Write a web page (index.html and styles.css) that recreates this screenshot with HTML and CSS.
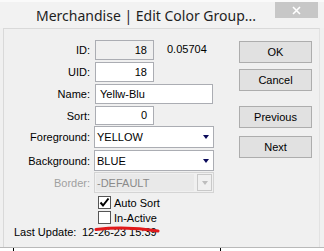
FILE: index.html
```html
<!DOCTYPE html>
<html lang="en">
<head>
  <meta charset="UTF-8" />
  <title>Merchandise | Edit Color Group</title>
  <link rel="stylesheet" href="styles.css">
</head>
<body>
  <div class="window">
    <div class="titlebar">
      <span class="title">Merchandise | Edit Color Group...</span>
      <div class="close">
        <svg width="9" height="9" viewBox="0 0 9 9"><path d="M1 1 L8 8 M8 1 L1 8" stroke="#fff" stroke-width="1.6"/></svg>
      </div>
    </div>

    <div class="client">
      <div class="form">
        <div class="row r-id">
          <label>ID:</label>
          <div class="text readonly num small">18</div>
          <span class="extra">0.05704</span>
        </div>
        <div class="row r-uid">
          <label>UID:</label>
          <div class="text num small">18</div>
        </div>
        <div class="row r-name">
          <label>Name:</label>
          <div class="text wide">Yellw-Blu</div>
        </div>
        <div class="row r-sort">
          <label>Sort:</label>
          <div class="text num small">0</div>
        </div>
        <div class="row r-fg">
          <label>Foreground:</label>
          <div class="combo"><span>YELLOW</span><i class="arrow"></i></div>
        </div>
        <div class="row r-bg">
          <label>Background:</label>
          <div class="combo"><span>BLUE</span><i class="arrow"></i></div>
        </div>
        <div class="row r-border">
          <label class="disabled">Border:</label>
          <div class="combo off"><span class="val">-DEFAULT</span><span class="btn"><i class="arrow"></i></span></div>
        </div>
        <div class="row check r-auto">
          <span class="box">
            <svg width="11" height="11" viewBox="0 0 11 11"><path d="M1.5 5.5 L4 8.5 L9.5 1.5" fill="none" stroke="#000" stroke-width="2"/></svg>
          </span>
          <span>Auto Sort</span>
        </div>
        <div class="row check r-active">
          <span class="box"></span>
          <span>In-Active</span>
        </div>
        <div class="updated">
          <span class="caption">Last Update:</span>
          <span>12-26-23 15:39</span>
        </div>
      </div>

      <div class="buttons">
        <div class="button">OK</div>
        <div class="button">Cancel</div>
        <div class="button gap">Previous</div>
        <div class="button">Next</div>
      </div>

      <!-- hand drawn mark over the dialog -->
      <svg class="scribble" width="70" height="10" viewBox="0 0 70 10">
        <path d="M2 4.5 Q 32 1 64 6" fill="none" stroke="#e0191b" stroke-width="3" stroke-linecap="round"/>
      </svg>
    </div>
  </div>
  <div class="behind">
    <span class="tick t1"></span>
    <span class="tick t2"></span>
  </div>
</body>
</html>
```

FILE: styles.css
```css
* {
  box-sizing: border-box;
}
html, body {
  margin: 0;
  padding: 0;
  background: #fff;
}
body {
  width: 324px;
  height: 251px;
  overflow: hidden;
  font-family: 'Liberation Sans', Arial, sans-serif;
  font-size: 11px;
  color: #000;
}

/* Window frame */
.window {
  height: 248px;
  background: #f0f0f0;
  border-top: 2px solid #fafafa;
  border-bottom: 1px solid #b9b9b9;
  display: flex;
  flex-direction: column;
}
.titlebar {
  height: 26px;
  display: flex;
  align-items: flex-start;
  background: #f2f2f2;
}
.title {
  font-family: 'Noto Sans', sans-serif;
  font-size: 14px;
  color: #1e1e1e;
  padding: 6px 0 0 36px;
  line-height: 16px;
  flex: 1;
}
.close {
  width: 43px;
  height: 16px;
  margin-right: 6px;
  background: #c7c7c7;
  display: flex;
  align-items: center;
  justify-content: center;
}

/* Client area */
.client {
  position: relative;
  flex: 1;
  margin-left: 3px;
  margin-right: 4px;
  border-top: 1px solid #d9d9d9;
  border-left: 1px solid #d9d9d9;
  border-right: 1px solid #e2e2e2;
  background: #f0f0f0;
  display: flex;
  padding-top: 11px;
}

.form {
  width: 231px;
  display: flex;
  flex-direction: column;
}
.row {
  display: flex;
  align-items: center;
  margin-bottom: 2px;
}
.row label {
  width: 86px;
  text-align: right;
  margin-right: 4px;
  flex-shrink: 0;
}
.row label.disabled {
  color: #a0a0a0;
}

.text {
  height: 20px;
  margin-left: 1px;
  border: 1px solid #abadb3;
  background: #fff;
  padding: 0 4px;
  line-height: 18px;
  color: #000;
}
.text.small {
  width: 59px;
}
.text.wide {
  width: 118px;
}
.text.num {
  text-align: right;
  padding-right: 6px;
}
.text.readonly {
  background: #f0f0f0;
}
.r-sort .text {
  height: 19px;
  line-height: 17px;
}
.r-sort {
  margin-bottom: 1px;
}
.extra {
  margin-left: 13px;
  margin-top: -2px;
}

.combo {
  width: 120px;
  height: 21px;
  border: 1px solid #abadb3;
  background: #fff;
  display: flex;
  align-items: center;
  padding-left: 2px;
}
.combo span {
  flex: 1;
}
.r-fg .combo {
  height: 22px;
}
.r-bg {
  margin-bottom: 1px;
}
.arrow {
  width: 0;
  height: 0;
  border-left: 3.5px solid transparent;
  border-right: 3.5px solid transparent;
  border-top: 4px solid #0a0a5a;
  margin-right: 4px;
}
.combo.off {
  background: #f0f0f0;
  border-color: #d4d4d4;
  color: #8a8a8a;
  padding: 1px;
}
.combo.off .val {
  height: 100%;
  background: #e9e9e9;
  padding-left: 1px;
  line-height: 18px;
  margin-right: 3px;
}
.combo.off .btn {
  flex: none;
  width: 15px;
  height: 100%;
  border: 1px solid #c9c9c9;
  background: #f0f0f0;
  display: flex;
  align-items: center;
  justify-content: center;
}
.combo.off .arrow {
  border-top-color: #bdbdbd;
  margin: 0;
}

/* Checkboxes */
.check {
  height: 15px;
  margin: 0 0 0 94px;
  gap: 3px;
}
.box {
  width: 13px;
  height: 13px;
  border: 1px solid #555;
  background: #fff;
  display: flex;
  align-items: center;
  justify-content: center;
}

.updated {
  margin-left: 10px;
  display: flex;
  line-height: 14px;
}
.caption {
  width: 68px;
  white-space: nowrap;
}

/* Buttons */
.buttons {
  margin-left: 4px;
  padding-top: 1px;
  display: flex;
  flex-direction: column;
  gap: 6px;
}
.button {
  width: 73px;
  height: 22px;
  border: 1px solid #adadad;
  background: #e1e1e1;
  text-align: center;
  line-height: 20px;
}
.button.gap {
  margin-top: 9px;
}
.button.gap + .button {
  margin-top: 2px;
}

.scribble {
  position: absolute;
  left: 90px;
  top: 196px;
}

/* Window behind, bottom strip */
.behind {
  height: 3px;
  position: relative;
}
.tick {
  position: absolute;
  top: 0;
  width: 1px;
  height: 3px;
  background: #000;
}
.t1 { left: 13px; }
.t2 { left: 220px; }
```
